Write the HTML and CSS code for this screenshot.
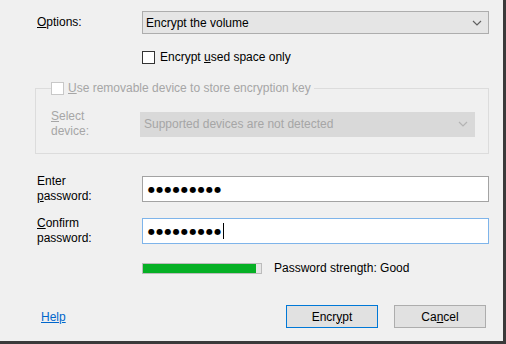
FILE: index.html
```html
<!DOCTYPE html>
<html lang="en">
<head>
  <meta charset="UTF-8">
  <title>Encrypt volume</title>
  <link rel="stylesheet" href="styles.css">
</head>
<body>
  <div class="dialog">
    <div class="row row-options">
      <label class="lbl"><u>O</u>ptions:</label>
      <div class="select">
        <span>Encrypt the volume</span>
        <svg class="chev" width="10" height="6" viewBox="0 0 10 6"><path d="M1 1l4 4 4-4" fill="none" stroke="#606060" stroke-width="1.2"/></svg>
      </div>
    </div>
    <div class="row row-check">
      <span class="box"></span>
      <span>Encrypt <u>u</u>sed space only</span>
    </div>
    <fieldset class="group">
      <legend><span class="box off"></span><span><u>U</u>se removable device to store encryption key</span></legend>
      <div class="row">
        <label class="lbl off"><u>S</u>elect<br>device:</label>
        <div class="select off">
          <span>Supported devices are not detected</span>
          <svg class="chev" width="10" height="6" viewBox="0 0 10 6"><path d="M1 1l4 4 4-4" fill="none" stroke="#b4b4b4" stroke-width="1.2"/></svg>
        </div>
      </div>
    </fieldset>
    <div class="row row-pass">
      <label class="lbl">Enter<br><u>p</u>assword:</label>
      <div class="field"><span class="dots">●●●●●●●●●</span></div>
    </div>
    <div class="row row-confirm">
      <label class="lbl"><u>C</u>onfirm<br>password:</label>
      <div class="field focus"><span class="dots">●●●●●●●●●</span><span class="caret"></span></div>
    </div>
    <div class="row row-strength">
      <div class="meter"><div class="fill" style="width: 96%"></div></div>
      <span>Password strength: Good</span>
    </div>
    <div class="row row-buttons">
      <a class="help" href="#">Help</a>
      <div class="buttons">
        <button class="btn default">Encr<u>y</u>pt</button>
        <button class="btn">Ca<u>n</u>cel</button>
      </div>
    </div>
  </div>
</body>
</html>
```

FILE: styles.css
```css
body {
  margin: 0;
  background: #fff;
  font-family: "Liberation Sans", Arial, sans-serif;
  font-size: 12px;
  color: #000;
}
.dialog {
  box-sizing: border-box;
  width: 506px;
  height: 344px;
  background: #f0f0f0;
  border-right: 3px solid #3a3a3a;
  border-bottom: 3px solid #3a3a3a;
  padding: 11px 14px 0 35px;
}
.row {
  display: flex;
  align-items: center;
}
.lbl {
  width: 105px;
  padding-left: 2px;
  line-height: 15px;
}
.off {
  color: #a6a6a6;
}
.select {
  flex: 1;
  height: 23px;
  box-sizing: border-box;
  background: #e5e5e5;
  border: 1px solid #adadad;
  display: flex;
  align-items: center;
  justify-content: space-between;
  padding: 0 6px 0 3px;
}
.select.off {
  height: 25px;
  background: #d9d9d9;
  border-color: #d9d9d9;
}
.row-check {
  margin: 16px 0 0 107px;
  gap: 5px;
}
.box {
  width: 11px;
  height: 11px;
  border: 1px solid #333;
  background: #fff;
  display: inline-block;
}
.box.off {
  border-color: #c8c8c8;
}
.group {
  margin: 17px 0 0;
  padding: 14px 13px 14px 15px;
  border: 1px solid #dcdcdc;
}
.group legend {
  padding: 0 3px 0 0;
  display: flex;
  align-items: center;
  gap: 4px;
  color: #a6a6a6;
  line-height: 14px;
}
.group .lbl {
  width: 89px;
  padding-left: 0;
}
.field {
  flex: 1;
  height: 26px;
  box-sizing: border-box;
  background: #fff;
  border: 1px solid #a3a3a3;
  display: flex;
  align-items: center;
  padding-left: 5px;
}
.field.focus {
  border-color: #7eb4ea;
}
.dots {
  font-family: "DejaVu Sans", sans-serif;
  font-size: 8px;
  letter-spacing: 1.3px;
}
.caret {
  width: 1px;
  height: 16px;
  background: #000;
}
.row-pass {
  margin-top: 20px;
}
.row-confirm {
  margin-top: 12px;
}
.row-strength {
  margin: 15px 0 0 107px;
  gap: 12px;
}
.meter {
  width: 118px;
  height: 9px;
  border: 1px solid #bcbcbc;
  background: #e6e6e6;
}
.fill {
  height: 100%;
  background: #06b025;
}
.row-buttons {
  margin-top: 30px;
  justify-content: space-between;
  padding-left: 6px;
}
.help {
  color: #0066cc;
}
.buttons {
  display: flex;
  gap: 16px;
  margin-right: 3px;
}
.btn {
  width: 92px;
  height: 23px;
  font-family: inherit;
  font-size: 12px;
  color: #000;
  background: #e1e1e1;
  border: 1px solid #adadad;
  padding: 0;
}
.btn.default {
  border-color: #0078d7;
}
```
